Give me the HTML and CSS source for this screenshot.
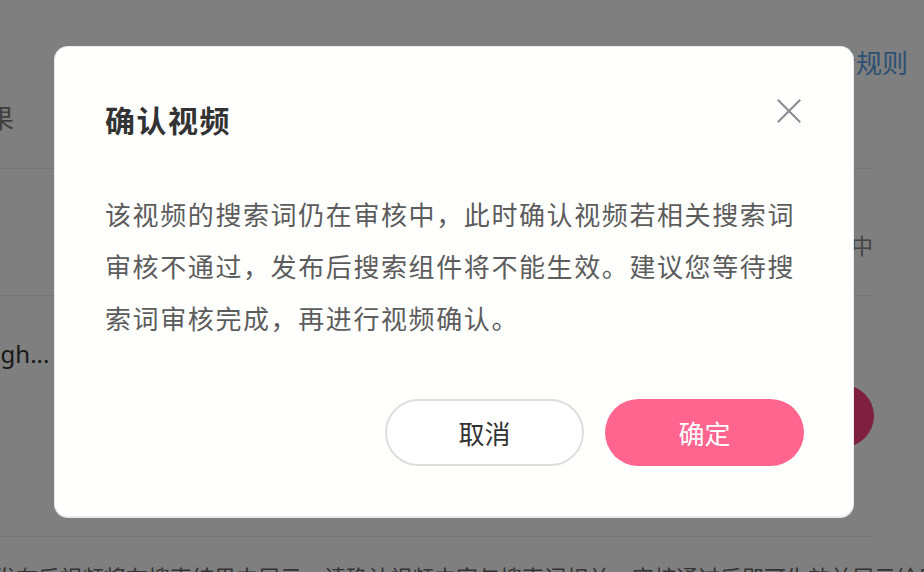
FILE: index.html
```html
<!DOCTYPE html>
<html lang="zh-CN">
<head>
<meta charset="utf-8">
<title>确认视频</title>
<link rel="stylesheet" href="styles.css">
</head>
<body>
<div class="page">
  <div class="row row-1">
    <span class="left-text tab">效果</span>
    <span class="rule-link">查看规则</span>
  </div>
  <div class="row row-2">
    <span class="status">审核中</span>
  </div>
  <div class="row row-3">
    <span class="left-text name">Walkthrough...</span>
    <span class="action-btn">确认</span>
  </div>
  <div class="row row-4">
    <span class="foot-text">发布后视频将在搜索结果中展示，请确认视频内容与搜索词相关，审核通过后即可生效并展示给用户</span>
  </div>
</div>

<div class="overlay">
  <div class="modal" role="dialog" aria-labelledby="modal-title">
    <div class="modal-header">
      <h2 class="modal-title" id="modal-title">确认视频</h2>
      <button class="close-btn" aria-label="关闭">
        <svg width="24" height="24" viewBox="0 0 24 24" fill="none" stroke="#8b8b90" stroke-width="2" stroke-linecap="square">
          <path d="M1.5 1.5 L22.5 22.5 M22.5 1.5 L1.5 22.5"/>
        </svg>
      </button>
    </div>
    <p class="modal-body">该视频的搜索词仍在审核中，此时确认视频若相关搜索词审核不通过，发布后搜索组件将不能生效。建议您等待搜索词审核完成，再进行视频确认。</p>
    <div class="modal-actions">
      <button class="btn btn-cancel">取消</button>
      <button class="btn btn-ok">确定</button>
    </div>
  </div>
</div>
</body>
</html>
```

FILE: styles.css
```css
* { box-sizing: border-box; }

html, body {
  margin: 0;
  padding: 0;
  width: 924px;
  height: 572px;
  overflow: hidden;
  background: #ffffff;
  font-family: "Noto Sans CJK SC", "Noto Sans", sans-serif;
}

/* background page */
.page {
  width: 874px;
  display: flex;
  flex-direction: column;
}

.row {
  display: flex;
  border-bottom: 1px solid #eeeeee;
}

.row-1 {
  height: 169px;
  justify-content: space-between;
  align-items: flex-start;
}

.left-text {
  color: #888;
  font-size: 26px;
}

.tab {
  margin-top: 98px;
  margin-left: -38px;
  color: #7e7e7e;
}

.rule-link {
  margin-top: 40px;
  margin-right: -34px;
  color: #5aa0e6;
  font-size: 26px;
  line-height: 44px;
}

.row-2 {
  height: 127px;
  justify-content: flex-end;
  align-items: flex-start;
}

.status {
  margin-top: 60px;
  font-size: 22px;
  color: #8a8a8a;
  line-height: 30px;
  margin-right: 1px;
}

.row-3 {
  height: 241px;
  justify-content: space-between;
  align-items: flex-start;
}

.name {
  margin-top: 40px;
  margin-left: -116px;
  font-family: "Noto Sans", sans-serif;
  font-size: 24px;
  color: #333;
  line-height: 36px;
}

.action-btn {
  margin-top: 89px;
  width: 120px;
  height: 62px;
  border-radius: 31px;
  background: #ff4080;
  color: #fff;
  font-size: 24px;
  line-height: 62px;
  text-align: center;
}

.row-4 {
  height: 35px;
  border-bottom: none;
  overflow: visible;
}

.foot-text {
  margin-top: 24px;
  margin-left: -6px;
  font-size: 22px;
  color: #666;
  white-space: nowrap;
  line-height: 30px;
}

/* overlay & modal */
.overlay {
  position: fixed;
  inset: 0;
  background: rgba(0, 0, 0, 0.5);
  display: flex;
  align-items: flex-start;
  justify-content: flex-start;
  padding: 46px 0 0 54px;
}

.modal {
  width: 800px;
  height: 472px;
  background: #fffffe;
  border: 1px solid #e8eaf0;
  border-bottom-width: 2px;
  border-radius: 14px;
  padding: 52px 49px 0 50px;
  display: flex;
  flex-direction: column;
}

.modal-header {
  display: flex;
  justify-content: space-between;
  align-items: flex-start;
  height: 40px;
}

.modal-title {
  margin: 0;
  font-size: 30px;
  line-height: 40px;
  font-weight: 700;
  color: #333;
  letter-spacing: 1.5px;
}

.close-btn {
  margin: 0 3px 0 0;
  padding: 0;
  border: none;
  background: none;
  width: 24px;
  height: 24px;
  display: block;
}

.close-btn svg { display: block; }

.modal-body {
  margin: 49px 0 0 0;
  font-size: 26px;
  line-height: 52px;
  letter-spacing: 1.6px;
  color: #5c5c5c;
}

.modal-actions {
  margin-top: 55px;
  display: flex;
  justify-content: flex-end;
  gap: 21px;
}

.btn {
  width: 199px;
  height: 67px;
  border-radius: 34px;
  font-family: "Noto Sans CJK SC", sans-serif;
  font-size: 26px;
  padding: 0;
  cursor: pointer;
}

.btn-cancel {
  background: #fff;
  border: 2px solid #dedede;
  color: #333;
}

.btn-ok {
  background: #ff658f;
  border: none;
  color: #fff;
}
```
